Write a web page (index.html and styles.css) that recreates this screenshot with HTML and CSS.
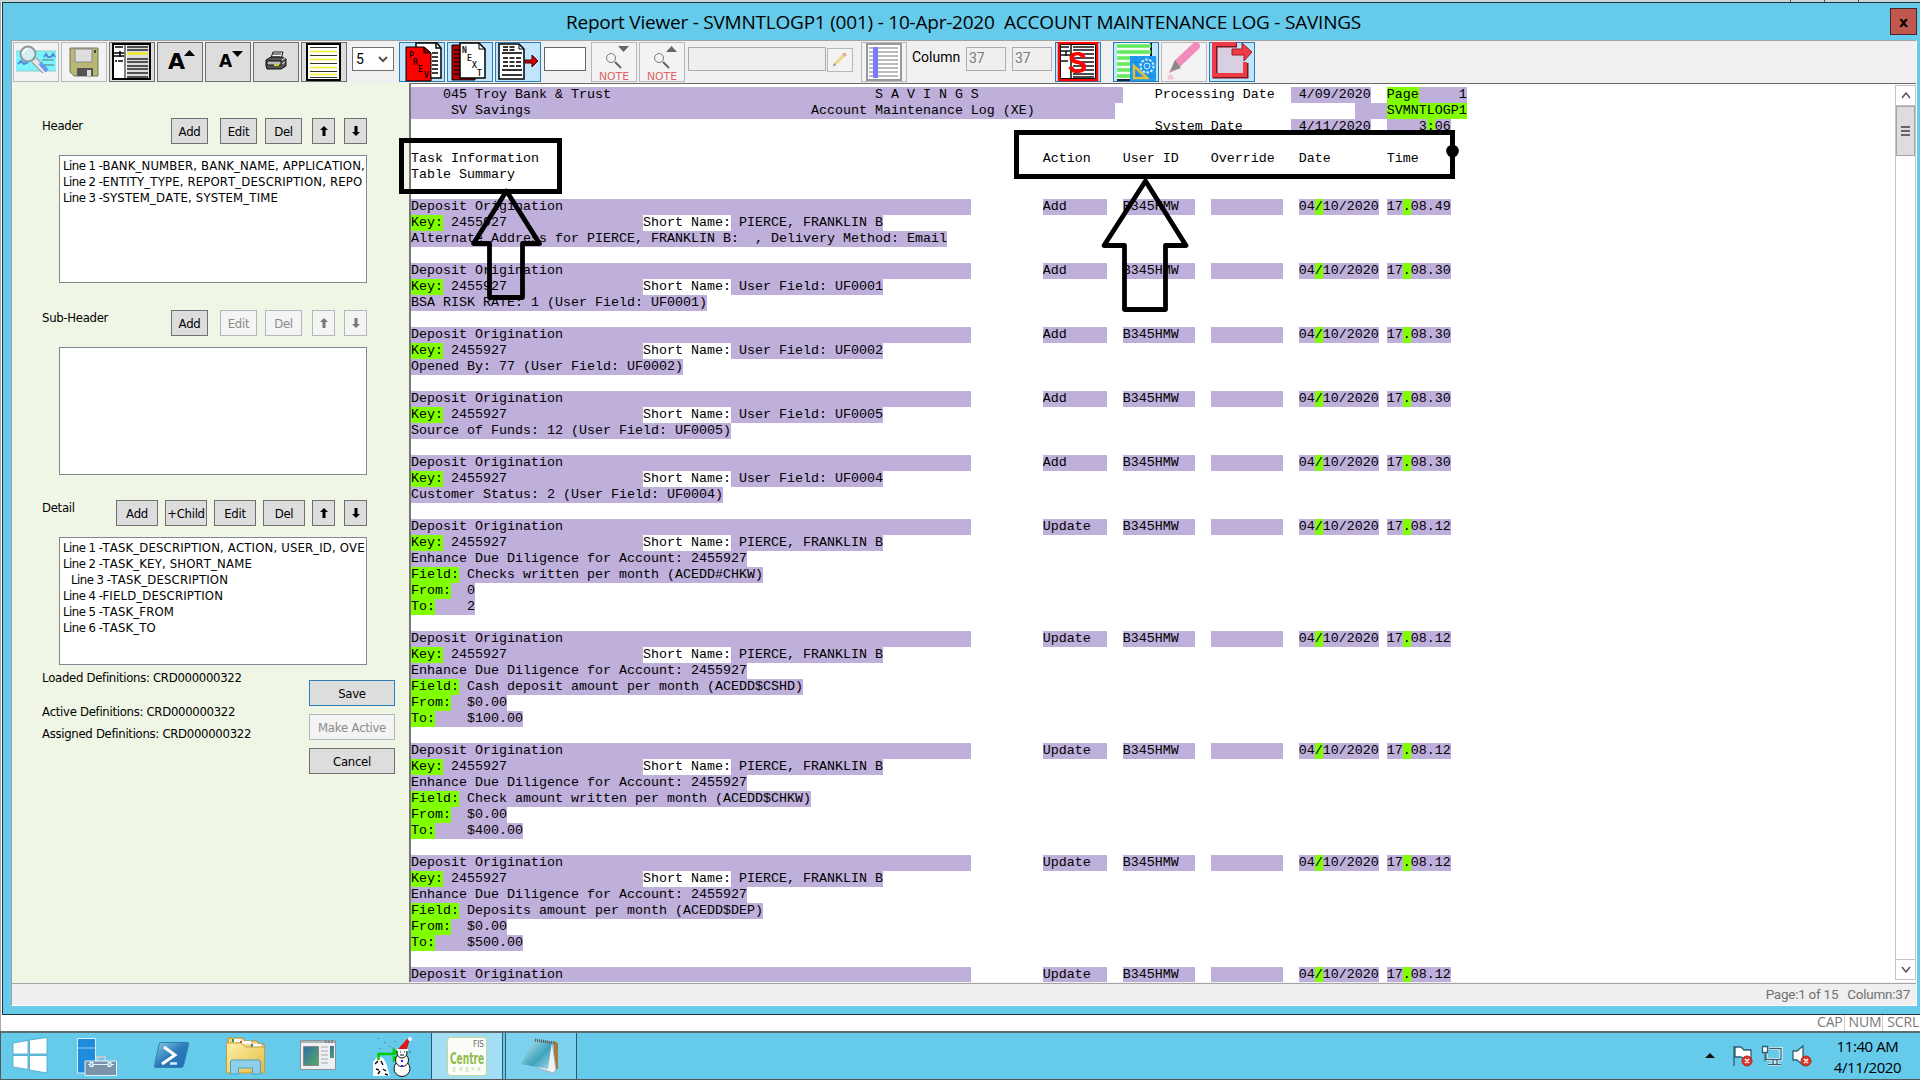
FILE: index.html
```html
<!DOCTYPE html>
<html lang="en">
<head>
<meta charset="utf-8">
<title>Report Viewer</title>
<link rel="stylesheet" href="styles.css">
</head>
<body>
<div class="desktop">
<div class="backdrop"><i></i><i></i><i></i></div>
<main class="window">
  <header class="titlebar">
    <h1 class="title">Report Viewer - SVMNTLOGP1 (001) - 10-Apr-2020&nbsp; ACCOUNT MAINTENANCE LOG - SAVINGS</h1>
    <button class="close">x</button>
  </header>
  <div class="client">
    <div class="toolbar">
      <button class="tool off"><svg viewBox="0 0 46 40"><path d="M3 9h40v20H3z" fill="#7df4fb"/><path d="M3 9h40M3 29h40" stroke="#8cc" /><path d="M5 22l3-3 3 3 4-2M31 15l2-3 2 3h3l2-3 2 3" stroke="#58d" fill="none" stroke-width="2"/><path d="M29 18h12M27 23h14" stroke="#578"/><path d="M21 18l11 11" stroke="#999" stroke-width="7"/><path d="M21 18l11 11" stroke="#e8e8e8" stroke-width="5"/><path d="M27 21l7 8" stroke="#69e" stroke-width="4"/><circle cx="15" cy="12" r="7.500" fill="#d3eef2" stroke="#8d9a9d" stroke-width="2"/><path d="M10 12a5 5 0 0 1 5-5" stroke="#fff" stroke-width="2" fill="none"/></svg></button>
      <button class="tool off"><svg viewBox="0 0 46 40"><path d="M9 6h28v28H13l-4-4z" fill="#b8b873" stroke="#77775a"/><path d="M14 7h17v13H14z" fill="#ddd" stroke="#888"/><path d="M16 26h16v8H16z" fill="#555"/><path d="M26 28h4v6h-4z" fill="#ddd"/><path d="M33 8h2v3h-2z" fill="#444"/></svg></button>
      <button class="tool"><svg viewBox="0 0 46 40"><path d="M4 2h37v35H4z" fill="#fff" stroke="#000" stroke-width="2"/><path d="M16 2v35" stroke="#000"/><path d="M6 5h8M5 11h10M5 14h10M11 9v6M6 19h2M9 19h5" stroke="#000" stroke-width="1.500"/><path d="M18 3h22v33H18z" fill="#ddd"/><path d="M18 5h21M18 8h21M18 17h21M18 20h21M18 24h21M18 27h21M18 31h21M18 35h21" stroke="#222" stroke-width="1.500"/><path d="M18 11.500h21" stroke="#ee0" stroke-width="2"/></svg></button>
      <button class="tool"><svg viewBox="0 0 46 40"><text x="11" y="27" class="glyph big">A</text><path d="M27 14l5.500-6 5.500 6z"/></svg></button>
      <button class="tool"><svg viewBox="0 0 46 40"><text x="14" y="25" class="glyph small">A</text><path d="M27 9l5.500 6L38 9z"/></svg></button>
      <button class="tool"><svg viewBox="0 0 46 40"><path d="M18 16l2-6h10l-2 7z" fill="#fff" stroke="#111"/><path d="M20 12h8M19 15h8" stroke="#111"/><path d="M13 18l5-3h11l4 2v7l-5 3H14l-1-3z" fill="#555" stroke="#111"/><path d="M14 19h14v4H14z" fill="#bbb" stroke="#111"/><path d="M29 18l3-2M29 22l3-2" stroke="#eee"/><path d="M21 23h5" stroke="#cc3" stroke-width="2"/></svg></button>
      <button class="tool"><svg viewBox="0 0 46 40"><path d="M6 2h33v36H6z" fill="#fff" stroke="#000" stroke-width="2"/><path d="M9 5.500h27M9 13.500h27M9 21.500h27M9 29.500h27M9 35.500h27" stroke="#333"/><path d="M9 9.500h27M9 17.500h27M9 25.500h27M9 32.500h27" stroke="#eded37" stroke-width="1.500"/></svg></button>
      <div class="select">5<svg viewBox="0 0 10 7"><path d="M1 1l4 4 4-4" fill="none" stroke="#555" stroke-width="2"/></svg></div>
      <button class="tool on"><svg viewBox="0 0 46 40"><path d="M17 1h21l4 5v30H17z" fill="#fff" stroke="#000" stroke-width="1.500"/><path d="M37 1v5h5M33 11h6M33 15h6M33 19h6M33 23h6M33 27h6M33 31h6" stroke="#000" stroke-width="1.500" fill="none"/><path d="M7 5h18l7 6v28H7z" fill="#f00" stroke="#000"/><path d="M25 5v6h7z" fill="#900" stroke="#000"/><g class="page"><text x="10" y="16">P</text><text x="14" y="23">R</text><text x="19" y="30">E</text><text x="25" y="36">V</text></g></svg></button>
      <button class="tool on"><svg viewBox="0 0 46 40"><path d="M5 3h23v35H5z" fill="#b00000" stroke="#000"/><path d="M7 8h6M7 12h6M7 16h6M7 20h6M7 24h6M7 28h6M7 32h6" stroke="#000"/><path d="M13 1h19l6 6v29H13z" fill="#fff" stroke="#000" stroke-width="1.500"/><path d="M32 1v6h6" fill="none" stroke="#000"/><g class="page"><text x="15" y="11">N</text><text x="20" y="19">E</text><text x="25" y="26">X</text><text x="30" y="34">T</text></g></svg></button>
      <button class="tool on"><svg viewBox="0 0 46 40"><path d="M4 2h20l5 5v30H4z" fill="#fff" stroke="#000" stroke-width="1.500"/><path d="M24 2v5h5" fill="none" stroke="#000"/><path d="M7 11h20M7 28h20M7 33h20" stroke="#333" stroke-width="2"/><path d="M8 5h13M8 8h13M8 16h18M8 20h18M8 24h18" stroke="#333" stroke-width="2" stroke-dasharray="5 1.500"/><path d="M30 18h7v-5l6 6-6 6v-4h-7z" fill="#d80000" stroke="#400"/></svg></button>
      <div class="field page-no"></div>
      <button class="tool off note-first"><svg viewBox="0 0 46 40"><path d="M27 4h11l-5.500 6z" fill="#666"/><circle cx="20" cy="16" r="4.500" fill="none" stroke="#777"/><path d="M24 20l6 6" stroke="#666" stroke-width="2"/><text x="8" y="38" class="note" textLength="30" lengthAdjust="spacingAndGlyphs">NOTE</text></svg></button>
      <button class="tool off"><svg viewBox="0 0 46 40"><path d="M27 10h11l-5.500-6z" fill="#666"/><circle cx="20" cy="16" r="4.500" fill="none" stroke="#777"/><path d="M24 20l6 6" stroke="#666" stroke-width="2"/><text x="8" y="38" class="note" textLength="30" lengthAdjust="spacingAndGlyphs">NOTE</text></svg></button>
      <div class="field note-text"></div>
      <button class="pencil"><svg viewBox="0 0 26 24"><path d="M8 16L18 6" stroke="#f1d58f" stroke-width="3.500"/><path d="M17 7l2-2" stroke="#e9a1a1" stroke-width="4"/><path d="M5 19l1.500-4 2.500 2.500z" fill="#999"/></svg></button>
      <button class="tool off ruler"><svg viewBox="0 0 46 40"><path d="M6 2h34v36H6z" fill="#fff" stroke="#999" stroke-width="2"/><path d="M8 6h29M8 10h29M8 14h29M8 18h29M8 22h29M8 26h29M8 30h29M8 34h29" stroke="#777"/><path d="M12 5h5v31h-5z" fill="#7b7bff"/></svg></button>
      <span class="caption">Column</span>
      <div class="field col">37</div>
      <div class="field col col2">37</div>
      <button class="tool on s-tool"><svg viewBox="0 0 46 40"><path d="M4 1h38v37H4z" fill="#fff" stroke="#f00" stroke-width="2.500"/><path d="M5.500 2.500h35v34h-35z" fill="none" stroke="#111"/><path d="M16 2v35M6 5h8M5 9h10M5 13h10M11 9v5M6 19h7M18 5h21M18 8h21M18 12h21M18 16h21M18 20h21M18 24h21M18 28h21M18 32h21M18 35h21" stroke="#111" stroke-width="1.500"/><text x="13" y="31" class="ess">S</text></svg></button>
      <button class="tool on design"><svg viewBox="0 0 46 40"><path d="M4 1h34v37H4z" fill="#f4fff4"/><path d="M38 1v14M4 38h14" stroke="#123" stroke-width="2"/><path d="M4 4h34M4 10h34M4 16h34M4 22h34M4 28h34M4 34h34" stroke="#63e95e" stroke-width="3.500"/><path d="M17 14h26v25H17z" fill="#1e9bf0"/><path d="M17 20h26M17 27h26M17 34h26M23 14v25M30 14v25M37 14v25" stroke="#1580ce" stroke-width=".7"/><circle cx="34" cy="24" r="6.500" fill="none" stroke="#d6efff" stroke-width="2" stroke-dasharray="2.500 1.500"/><circle cx="34" cy="24" r="3" fill="none" stroke="#d6efff"/><path d="M21 24v12h13z" fill="none" stroke="#e3c03c" stroke-width="2.500"/></svg></button>
      <button class="tool off"><svg viewBox="0 0 46 40"><path d="M17 21L35 4" stroke="#f08cbc" stroke-width="8" stroke-linecap="round"/><path d="M14 18l6 8-8 3-2-2z" fill="#888"/><path d="M10 26l3 3-5 2z" fill="#df7fae"/><path d="M6 34l4-2 4 5-7 1z" fill="#f7c6dc"/></svg></button>
      <button class="tool on"><svg viewBox="0 0 46 40"><path d="M28 3H6v31h31V21" fill="#d9cfe2" stroke="#7c1520" stroke-width="5"/><path d="M27 2H5v31h31V20" fill="none" stroke="#ee3b48" stroke-width="4"/><path d="M23 7h10V1l10 9-8 9v-6H23z" fill="#ee3b48" stroke="#9b1c26"/></svg></button>
    </div>
    <div class="body">
      <aside class="panel">
        <section class="group">
          <div class="bar"><h2 class="label">Header</h2><button class="btn">Add</button><button class="btn edit">Edit</button><button class="btn">Del</button><button class="btn arrow"><svg viewBox="0 0 8 10"><path d="M4 0l4 4H5.500v6h-3V4H0z"/></svg></button><button class="btn arrow"><svg viewBox="0 0 8 10"><path d="M4 10l4-4H5.500V0h-3v6H0z"/></svg></button></div>
          <div class="list"><p>Line 1 -<span class="names">BANK_NUMBER, BANK_NAME, APPLICATION, R</span></p><p>Line 2 -<span class="names">ENTITY_TYPE, REPORT_DESCRIPTION, REPO</span></p><p>Line 3 -<span class="names">SYSTEM_DATE, SYSTEM_TIME</span></p></div>
        </section>
        <section class="group">
          <div class="bar"><h2 class="label">Sub-Header</h2><button class="btn">Add</button><button class="btn edit dim">Edit</button><button class="btn dim">Del</button><button class="btn arrow dim"><svg viewBox="0 0 8 10"><path d="M4 0l4 4H5.500v6h-3V4H0z"/></svg></button><button class="btn arrow dim"><svg viewBox="0 0 8 10"><path d="M4 10l4-4H5.500V0h-3v6H0z"/></svg></button></div>
          <div class="list"></div>
        </section>
        <section class="group detail">
          <div class="bar"><h2 class="label">Detail</h2><button class="btn">Add</button><button class="btn">+Child</button><button class="btn">Edit</button><button class="btn">Del</button><button class="btn arrow"><svg viewBox="0 0 8 10"><path d="M4 0l4 4H5.500v6h-3V4H0z"/></svg></button><button class="btn arrow"><svg viewBox="0 0 8 10"><path d="M4 10l4-4H5.500V0h-3v6H0z"/></svg></button></div>
          <div class="list"><p>Line 1 -<span class="names">TASK_DESCRIPTION, ACTION, USER_ID, OVE</span></p><p>Line 2 -<span class="names">TASK_KEY, SHORT_NAME</span></p><p class="child">Line 3 -<span class="names">TASK_DESCRIPTION</span></p><p>Line 4 -<span class="names">FIELD_DESCRIPTION</span></p><p>Line 5 -<span class="names">TASK_FROM</span></p><p>Line 6 -<span class="names">TASK_TO</span></p></div>
        </section>
        <div class="foot">
          <div class="defs"><p class="loaded">Loaded Definitions: CRD000000322</p><p>Active Definitions: CRD000000322</p><p>Assigned Definitions: CRD000000322</p></div>
          <div class="actions"><button class="btn default">Save</button><button class="btn dim">Make Active</button><button class="btn">Cancel</button></div>
        </div>
      </aside>
      <div class="viewer">
<pre class="report"><span class="f">    045 Troy Bank &amp; Trust                                 S A V I N G S                  </span>    Processing Date  <span class="f"> 4/09/2020</span>  <span class="k">Page</span><span class="f">     1</span>
<span class="f">     SV Savings                                   Account Maintenance Log (XE)          </span>                              <span class="f">    </span><span class="k">SVMNTLOGP1</span>
                                                                                             System Date      <span class="f"> 4/11/2020</span>  <span class="f">    3</span><span class="k">:</span><span class="f">06</span>

Task Information                                                               Action    User ID    Override   Date       Time
Table Summary

<span class="f">Deposit Origination                                                   </span>         <span class="f">Add     </span>  <span class="f">B345HMW  </span>  <span class="f">         </span>  <span class="f">04</span><span class="k">/</span><span class="f">10/2020</span> <span class="f">17</span><span class="k">.</span><span class="f">08.49</span>
<span class="k">Key:</span><span class="f"> 2455927                 </span>Short Name:<span class="f"> PIERCE, FRANKLIN B</span>
<span class="f">Alternate Address for PIERCE, FRANKLIN B:  , Delivery Method: Email</span>

<span class="f">Deposit Origination                                                   </span>         <span class="f">Add     </span>  <span class="f">B345HMW  </span>  <span class="f">         </span>  <span class="f">04</span><span class="k">/</span><span class="f">10/2020</span> <span class="f">17</span><span class="k">.</span><span class="f">08.30</span>
<span class="k">Key:</span><span class="f"> 2455927                 </span>Short Name:<span class="f"> User Field: UF0001</span>
<span class="f">BSA RISK RATE: 1 (User Field: UF0001)</span>

<span class="f">Deposit Origination                                                   </span>         <span class="f">Add     </span>  <span class="f">B345HMW  </span>  <span class="f">         </span>  <span class="f">04</span><span class="k">/</span><span class="f">10/2020</span> <span class="f">17</span><span class="k">.</span><span class="f">08.30</span>
<span class="k">Key:</span><span class="f"> 2455927                 </span>Short Name:<span class="f"> User Field: UF0002</span>
<span class="f">Opened By: 77 (User Field: UF0002)</span>

<span class="f">Deposit Origination                                                   </span>         <span class="f">Add     </span>  <span class="f">B345HMW  </span>  <span class="f">         </span>  <span class="f">04</span><span class="k">/</span><span class="f">10/2020</span> <span class="f">17</span><span class="k">.</span><span class="f">08.30</span>
<span class="k">Key:</span><span class="f"> 2455927                 </span>Short Name:<span class="f"> User Field: UF0005</span>
<span class="f">Source of Funds: 12 (User Field: UF0005)</span>

<span class="f">Deposit Origination                                                   </span>         <span class="f">Add     </span>  <span class="f">B345HMW  </span>  <span class="f">         </span>  <span class="f">04</span><span class="k">/</span><span class="f">10/2020</span> <span class="f">17</span><span class="k">.</span><span class="f">08.30</span>
<span class="k">Key:</span><span class="f"> 2455927                 </span>Short Name:<span class="f"> User Field: UF0004</span>
<span class="f">Customer Status: 2 (User Field: UF0004)</span>

<span class="f">Deposit Origination                                                   </span>         <span class="f">Update  </span>  <span class="f">B345HMW  </span>  <span class="f">         </span>  <span class="f">04</span><span class="k">/</span><span class="f">10/2020</span> <span class="f">17</span><span class="k">.</span><span class="f">08.12</span>
<span class="k">Key:</span><span class="f"> 2455927                 </span>Short Name:<span class="f"> PIERCE, FRANKLIN B</span>
<span class="f">Enhance Due Diligence for Account: 2455927</span>
<span class="k">Field:</span><span class="f"> Checks written per month (ACEDD#CHKW)</span>
<span class="k">From:</span><span class="f">  0</span>
<span class="k">To:</span><span class="f">    2</span>

<span class="f">Deposit Origination                                                   </span>         <span class="f">Update  </span>  <span class="f">B345HMW  </span>  <span class="f">         </span>  <span class="f">04</span><span class="k">/</span><span class="f">10/2020</span> <span class="f">17</span><span class="k">.</span><span class="f">08.12</span>
<span class="k">Key:</span><span class="f"> 2455927                 </span>Short Name:<span class="f"> PIERCE, FRANKLIN B</span>
<span class="f">Enhance Due Diligence for Account: 2455927</span>
<span class="k">Field:</span><span class="f"> Cash deposit amount per month (ACEDD$CSHD)</span>
<span class="k">From:</span><span class="f">  $0.00</span>
<span class="k">To:</span><span class="f">    $100.00</span>

<span class="f">Deposit Origination                                                   </span>         <span class="f">Update  </span>  <span class="f">B345HMW  </span>  <span class="f">         </span>  <span class="f">04</span><span class="k">/</span><span class="f">10/2020</span> <span class="f">17</span><span class="k">.</span><span class="f">08.12</span>
<span class="k">Key:</span><span class="f"> 2455927                 </span>Short Name:<span class="f"> PIERCE, FRANKLIN B</span>
<span class="f">Enhance Due Diligence for Account: 2455927</span>
<span class="k">Field:</span><span class="f"> Check amount written per month (ACEDD$CHKW)</span>
<span class="k">From:</span><span class="f">  $0.00</span>
<span class="k">To:</span><span class="f">    $400.00</span>

<span class="f">Deposit Origination                                                   </span>         <span class="f">Update  </span>  <span class="f">B345HMW  </span>  <span class="f">         </span>  <span class="f">04</span><span class="k">/</span><span class="f">10/2020</span> <span class="f">17</span><span class="k">.</span><span class="f">08.12</span>
<span class="k">Key:</span><span class="f"> 2455927                 </span>Short Name:<span class="f"> PIERCE, FRANKLIN B</span>
<span class="f">Enhance Due Diligence for Account: 2455927</span>
<span class="k">Field:</span><span class="f"> Deposits amount per month (ACEDD$DEP)</span>
<span class="k">From:</span><span class="f">  $0.00</span>
<span class="k">To:</span><span class="f">    $500.00</span>

<span class="f">Deposit Origination                                                   </span>         <span class="f">Update  </span>  <span class="f">B345HMW  </span>  <span class="f">         </span>  <span class="f">04</span><span class="k">/</span><span class="f">10/2020</span> <span class="f">17</span><span class="k">.</span><span class="f">08.12</span></pre>
        <div class="scrollbar">
          <div class="step"><svg viewBox="0 0 10 7"><path d="M1 6l4-5 4 5" fill="none" stroke="#555" stroke-width="1.500"/></svg></div>
          <div class="thumb"><i></i><i></i><i></i></div>
          <div class="step down"><svg viewBox="0 0 10 7"><path d="M1 1l4 5 4-5" fill="none" stroke="#555" stroke-width="1.500"/></svg></div>
        </div>
      </div>
    </div>
    <footer class="status"><span>Page:1 of 15</span><span>Column:37</span></footer>
  </div>
</main>
<div class="keys"><span>CAP</span><span>NUM</span><span>SCRL</span></div>
<nav class="taskbar">
  <div class="start"><svg viewBox="0 0 60 46"><path d="M13 10l15-2.500V21H13zM29.500 7L47 4.500V21H29.500zM13 22.500h15v14L13 34zM29.500 22.500H47V40l-17.500-3z" fill="#fff" stroke="#4aa5c4" stroke-width=".8"/></svg></div>
  <div class="task"><svg viewBox="0 0 74 46"><path d="M17.500 5.500h18V40h-18z" fill="#1f8bdc" stroke="#d6f0fb"/><path d="M18 15h17" stroke="#8fd0f5"/><path d="M37 28v-4h8v4" fill="none" stroke="#b9cbd6" stroke-width="2"/><path d="M25 28h31.500v14.500H25z" fill="#7a93a8" stroke="#e4f3fa"/><path d="M28 31.500h26" stroke="#e4f3fa"/><path d="M30 29.500h3v4h-3zM48 29.500h3v4h-3z" fill="#7ac0dd" stroke="#fff"/></svg></div>
  <div class="task"><svg viewBox="0 0 74 46"><defs><linearGradient id="ps" x2="1" y2="1"><stop stop-color="#8fc9ea"/><stop offset=".5" stop-color="#2a7cb8"/><stop offset="1" stop-color="#2568bb"/></linearGradient></defs><path d="M27 9.500h26q2 0 1.500 2l-5 21q-.5 2-2.500 2H22q-2 0-1.500-2l4.500-21q.5-2 2-2z" fill="url(#ps)" stroke="#2b7fab"/><path d="M30 14l11 8-13 9" fill="none" stroke="#fff" stroke-width="3"/><path d="M36 30.500h7" stroke="#d6ecfa" stroke-width="2.500"/></svg></div>
  <div class="task"><svg viewBox="0 0 74 46"><defs><linearGradient id="fo" x2="1" y2="1"><stop stop-color="#fff0ad"/><stop offset="1" stop-color="#e3bb3d"/></linearGradient></defs><path d="M20 12V5h15l2 3h12l2 3h5v9H20z" fill="#f0d787" stroke="#b98f2f"/><path d="M25 6h8v3h-8zM33 8h10v3H33zM44 11h9v3h-9z" fill="#fff"/><path d="M24 6h2v3h-2z" fill="#2b9b3b"/><path d="M32 8h2v3h-2z" fill="#d33"/><path d="M43 11h2v3h-2z" fill="#2878d0"/><path d="M18.500 10h15l4 4h19v26h-38z" fill="url(#fo)" stroke="#c69f3c"/><path d="M22.500 41V29q0-2 2-2h26q2 0 2 2v12h-8v-6h-14v6z" fill="#8fcfe9" stroke="#4e9dc4"/></svg></div>
  <div class="task"><svg viewBox="0 0 74 46"><defs><linearGradient id="wi" x2="1" y2="1"><stop stop-color="#2f6ca4"/><stop offset="1" stop-color="#5bab67"/></linearGradient></defs><path d="M18.500 7.500h35v29h-35z" fill="#edf0f2" stroke="#8a9399"/><path d="M19 9h34" stroke="#aab5ba" stroke-width="2"/><path d="M43 9h9" stroke="#456" stroke-dasharray="2 1"/><path d="M21.500 13.500h15v19h-15z" fill="url(#wi)" stroke="#888"/><path d="M39 14h7M39 18h7M39 22h7M39 26h7M39 30h7" stroke="#ccc" stroke-width="2"/><path d="M48 13h4v12h-4z" fill="url(#wi)"/></svg></div>
  <div class="task"><svg viewBox="0 0 74 46"><path d="M17 43V29l5-6 5 2 3 5 4 13z" fill="#fff"/><path d="M19 31l3-3M25 28l2 4M20 36l3 1M27 36l3 2M22 41l2-3M29 41l3 1" stroke="#111" stroke-width="1.500"/><path d="M22.500 27v-6H38v-4l5 5-5 5v-4" fill="none" stroke="#00d000" stroke-width="2.500"/><g fill="#fff" stroke="#111"><circle cx="46" cy="35.500" r="8"/><circle cx="46" cy="27" r="6.500"/><circle cx="46" cy="20" r="5"/></g><path d="M42 16L51 6l3 0-3 10z" fill="#e01818"/><path d="M41 17h11" stroke="#fff" stroke-width="2"/><circle cx="54" cy="6" r="2" fill="#fff"/><path d="M44 19h1M48 19h1M44 22h4" stroke="#111"/><path d="M46 27v2M46 32v2" stroke="#22f" stroke-width="2"/><path d="M22 5v1M29 9v1M39 8v1M34 13v1M24 15v1M54 18v2" stroke="#7b5148"/></svg></div>
  <div class="task active"><svg viewBox="0 0 74 46"><rect x="17.500" y="4.500" width="39" height="38" rx="3" fill="#fbfdf8" stroke="#c0d89b"/><text x="43" y="14" class="fis" textLength="11" lengthAdjust="spacingAndGlyphs">FIS</text><text x="20" y="31" class="centre" textLength="34" lengthAdjust="spacingAndGlyphs">Centre</text><path d="M24 34v5M31 34v4M37 34v5M43 34v3M49 34v4" stroke="#dcebc9" stroke-width="3"/></svg></div>
  <div class="task open"><svg viewBox="0 0 74 46"><defs><linearGradient id="no" x2="1" y2="1"><stop stop-color="#c9eef5"/><stop offset=".6" stop-color="#3fa3bd"/><stop offset="1" stop-color="#a9dce8"/></linearGradient></defs><path d="M50 8l4 2v26l-4 1z" fill="#a47a3c"/><path d="M48 8l4 29-3 3-15-5z" fill="#eef3f4" stroke="#aab"/><path d="M31 6l17 3-4 27-27-5z" fill="url(#no)"/><path d="M31 7l19 3" stroke="#555" stroke-width="3" stroke-dasharray="1 1"/></svg></div>
  <div class="tray"><svg viewBox="0 0 110 46"><path d="M0 25h10l-5-5z" fill="#111"/><g stroke="#2f5f70" stroke-width="1.300" fill="#fff"><path d="M29 13v20M30 14h6l3 3h7v9h-7l-3-2h-6z"/><path d="M64.500 15.500H76v11H61v-7M68 27v4M72 27v4M63 31.500h13" fill="none" stroke="#fff" stroke-width="3"/><path d="M64.500 15.500H76v11H61v-7M68 27v4M72 27v4M63 31.500h13" fill="none"/><path d="M57.500 13.500h5v6h-5zM60 19.500v9"/><path d="M88 18h4l6-5v19l-6-5h-4z"/></g><g fill="#dc3326" stroke="#b52a20"><circle cx="42" cy="28" r="5"/><circle cx="101" cy="28" r="5"/></g><path d="M40 26l4 4M44 26l-4 4M99 26l4 4M103 26l-4 4" stroke="#fff" stroke-width="1.700"/></svg>
    <div class="clock"><span>11:40 AM</span><span>4/11/2020</span></div></div>
</nav>
<svg class="markup" viewBox="0 0 1920 1080"><g fill="none" stroke="#000" stroke-width="5"><path d="M401.500 140.500h158v51h-158zM1016.500 132.500h436v44h-436z"/><g stroke-width="4.800" stroke-linejoin="round"><path d="M506.500 191L539.500 243.500H522.500V297.500H489.500V243.500H473.500z"/><path d="M1145.500 181L1186 245.500H1165.500V309.500H1124.500V245.500H1104z"/></g></g><circle cx="1452.500" cy="151" r="6.300"/></svg>
</div>
</body>
</html>
```
FILE: styles.css
```css
* { box-sizing: border-box; }
body { margin: 0; width: 1920px; height: 1080px; overflow: hidden; background: #fff; }
button { font: inherit; letter-spacing: inherit; padding: 0; margin: 0; border-radius: 0; color: inherit; }
p, h1, h2, pre { margin: 0; font-weight: normal; }
svg { display: block; }

.desktop { position: relative; display: flex; flex-direction: column; width: 1920px; height: 1080px; padding-left: 2px; box-shadow: inset 1px 0 #aaa; }
.backdrop { display: flex; flex: none; gap: 33px; justify-content: flex-end; height: 2px; margin-left: -2px; padding-right: 61px; background: #c5d9dc; }
.backdrop i { width: 1px; background: #555; }

.window { display: flex; flex-direction: column; flex: none; height: 1013px; padding: 0 3px 8px 8px; background: #66caea; border: 1px solid #24323a; border-right: 0; }
.titlebar { display: grid; grid-template-columns: 1fr 27px; flex: none; height: 37px; align-items: start; padding-top: 5px; }
.title { padding-left: 26px; text-align: center; font: 19px/28px "Open Sans", sans-serif; letter-spacing: -.22px; white-space: nowrap; }
.close { height: 27px; background: #c1584f; border: 1px solid #452724; font: bold 14px/20px "DejaVu Sans", sans-serif; }

.client { display: flex; flex-direction: column; flex: 1; min-height: 0; border: 1px solid #a2a2a2; border-right-color: #fff; border-bottom-color: #fff; background: #efefef; }
.toolbar { display: flex; flex: none; gap: 2px; height: 42px; padding: 1px 0 0 1px; background: #f0f0f0; align-items: flex-start; font: 14px/22px Roboto, sans-serif; }
.tool { flex: none; width: 46px; height: 40px; border: 1px solid #707070; background: #ddd; }
.tool svg { width: 46px; height: 40px; margin: -1px; }
.tool.off { border-color: #b7babd; background: #f3f3f3; }
.tool.on { border-color: #2c7cb8; background: #bfe6fc; }
.glyph { font-family: "DejaVu Sans", sans-serif; font-weight: bold; }
.glyph.big { font-size: 22px; }
.glyph.small { font-size: 17px; }
.page { font: 8px "DejaVu Sans Mono", monospace; stroke: #000; stroke-width: .2px; }
.note { font: 10px "DejaVu Sans", sans-serif; fill: #df6262; }
.ess { font: bold 32px "Liberation Mono", monospace; fill: #f00; }
.select { display: flex; align-items: center; justify-content: space-between; width: 42px; height: 24px; margin: 5px 3px 0 3px; padding: 0 5px 0 3px; background: #fff; border: 1px solid #707070; }
.select svg { width: 10px; height: 7px; }
.field { height: 24px; margin-top: 5px; padding-left: 2px; border: 1px solid #abadb3; background: #efefef; color: #7b7b7b; line-height: 21px; }
.page-no { width: 42px; margin-left: 1px; margin-right: 3px; border-color: #666; background: #fff; }
.note-text { width: 138px; margin-left: 1px; }
.pencil { width: 26px; height: 24px; margin: 6px 0 0 -1px; border: 1px solid #b7babd; background: #f3f3f3; }
.pencil svg { width: 24px; height: 22px; }
.ruler { margin-left: 6px; }
.caption { width: 52px; margin: 4px 0 0 3px; }
.col { width: 40px; }
.col2 { margin-left: 4px; }
.s-tool { margin-left: 1px; }
.design { margin-left: 10px; }

.body { display: flex; flex: 1; min-height: 0; }
.panel { flex: none; width: 397px; padding: 35px 14px 0 30px; background: #eff6e5; font: 13px/16px "DejaVu Sans Condensed", "DejaVu Sans", sans-serif; letter-spacing: -.3px; font-kerning: none; }
.group { width: 325px; margin-bottom: 27px; }
.bar { display: flex; height: 26px; margin-bottom: 11px; }
.label { flex: 1; font-size: 13px; }
.btn { flex: none; width: 37px; height: 26px; margin-left: 8px; padding-top: 2px; white-space: nowrap; color: #000; background: #ddd; border: 1px solid #707070; }
.btn.edit { margin-left: 12px; }
.btn.arrow { width: 23px; margin-left: 9px; }
.btn svg { width: 8px; height: 10px; margin: -2px auto 0; }
.group .arrow:not(:last-child) { margin-left: 10px; }
.btn.dim { color: #8b8b8b; background: #f4f4f4; border-color: #b2b5b9; }
.btn.dim svg { fill: #777; }
.btn.default { border-color: #2c7cb8; }
.detail { margin-bottom: 0; }
.detail .btn:not(.arrow) { width: 42px; margin-left: 7px; }
.detail .arrow:not(:last-child) { margin-left: 7px; }
.list { width: 308px; height: 128px; margin-left: 17px; padding: 2px 0 0 3px; overflow: hidden; background: #fff; border: 1px solid #828790; white-space: nowrap; }
.list p { letter-spacing: -.5px; }
.list .names { letter-spacing: .15px; }
.list .child { padding-left: 8px; }
.group:nth-child(2) { margin-bottom: 25px; }
.foot { display: flex; justify-content: space-between; }
.defs { padding-top: 5px; }
.defs p { margin-bottom: 6px; }
.defs .loaded { margin-bottom: 18px; }
.actions { display: flex; flex-direction: column; gap: 8px; padding-top: 15px; }
.actions .btn { width: 86px; margin: 0; }

.viewer { display: flex; flex: 1; min-width: 0; justify-content: space-between; margin-bottom: 1px; padding-top: 1px; overflow: hidden; background: #fff; border-top: 1px solid #6a6a6a; border-left: 2px solid #777; }
.report { height: 897px; padding-top: 2px; overflow: hidden; font: 13.333px/16px "Liberation Mono", "Courier New", monospace; }
.f, .k { display: inline-block; height: 16px; vertical-align: top; }
.f { background: #bfafdb; }
.k { background: #7fff00; }
.scrollbar { display: flex; flex-direction: column; width: 21px; margin-bottom: 2px; border: 1px solid #c3c3c3; border-width: 0 1px; }
.step { display: flex; flex: none; height: 21px; align-items: center; justify-content: center; border: 1px solid #c3c3c3; border-width: 1px 0; }
.step svg { width: 10px; height: 7px; }
.down { margin-top: auto; }
.thumb { display: flex; flex-direction: column; gap: 2px; align-items: center; justify-content: center; height: 50px; background: #ddd; border: 1px solid #a5a5a5; }
.thumb i { width: 9px; height: 2px; background: #666; }
.status { display: flex; flex: none; justify-content: flex-end; gap: 9px; height: 22px; padding-right: 6px; border-top: 1px solid #a5a5a5; color: #717171; font: 13.500px/20px Roboto, sans-serif; letter-spacing: -.25px; }

.keys { display: flex; flex: none; justify-content: flex-end; height: 16px; color: #7a7a7a; font: 14px/14px "Open Sans", sans-serif; letter-spacing: -.2px; }
.keys span { padding: 0 1px 0 4px; border-right: 1px solid #ccc; }
.keys span:last-child { border: 0; }

.taskbar { display: flex; flex: none; height: 49px; margin-left: -2px; background: #66caea; border: 1px solid #52585c; border-top: 2px solid #5c6c72; border-right: 0; }
.start { width: 59px; }
.start svg { width: 60px; height: 46px; margin-left: -1px; }
.task { width: 74px; }
.task svg { width: 74px; height: 46px; }
.task.active, .task.open { width: 72px; margin: 0 1px; border: 1px solid #2c5b70; border-width: 0 1px; }
.task.active svg, .task.open svg { margin-left: -2px; }
.active { background: #a3def4; }
.open { background: #7bd1ee; }
.fis { font: 8px "DejaVu Sans", sans-serif; fill: #666; }
.centre { font: bold 16px "DejaVu Sans Condensed", sans-serif; fill: #8dba4b; }
.tray { display: flex; margin-left: auto; }
.tray svg { width: 110px; height: 46px; }
.clock { display: flex; flex-direction: column; align-items: center; width: 105px; padding-top: 3px; font: 15px/21px "Open Sans", sans-serif; letter-spacing: -.4px; }
.markup { position: absolute; inset: 0; width: 1920px; height: 1080px; pointer-events: none; }
```
